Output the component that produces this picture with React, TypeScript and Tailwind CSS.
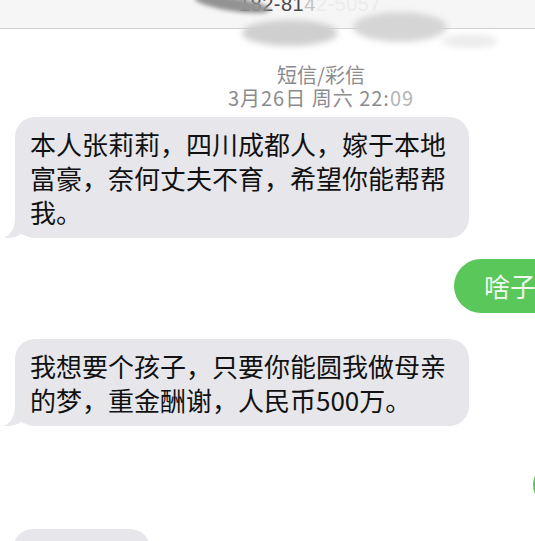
import React from "react";

const font = { fontFamily: '"Noto Sans CJK SC", "Noto Sans", sans-serif' };

function Tail() {
  return (
    <svg
      className="absolute bottom-0 left-[-12px]"
      width="22"
      height="20"
      viewBox="0 0 22 20"
    >
      <path
        d="M12 0 C12 10 8 17 0.5 20 C7 20.6 13 19.2 18 16 L22 17.5 L22 0 Z"
        fill="#e6e6eb"
      />
    </svg>
  );
}

function Received({ children, className = "" }: { children: React.ReactNode; className?: string }) {
  return (
    <div className={`flex pl-[15px] ${className}`}>
      <div className="relative max-w-[454px] rounded-[20px] bg-[#e6e6eb] pl-[15px] pr-[21px] pt-[10px] pb-[9px] text-[26px] leading-[34px] text-[#111111]">
        <Tail />
        <span className="relative">{children}</span>
      </div>
    </div>
  );
}

export default function App() {
  return (
    <div className="relative h-[541px] w-[535px] overflow-hidden bg-white" style={font}>
      <div className="w-[642px]">
        {/* header */}
        <div className="flex h-[29px] justify-center overflow-hidden border-b border-[#d2d2d2] bg-[#f6f6f6]">
          <div
            className="-mt-[6px] pr-[22px] text-[20px] leading-[20px] tracking-[0.5px]"
            style={{ fontFamily: '"Liberation Sans", Arial, sans-serif' }}
          >
            <span className="text-[#4a4a4a]">182-81</span>
            <span className="text-[#c4c4c4]">4</span>
            <span className="text-[#ececec]">2-5057</span>
          </div>
        </div>

        {/* date header */}
        <div className="mt-[34px] flex flex-col items-center text-[20px] leading-[23px] text-[#8b8b8f]">
          <div>短信/彩信</div>
          <div className="tracking-[1px]">
            3月26日 周六 22:<span className="text-[#b4b4b8]">09</span>
          </div>
        </div>

        <Received className="mt-[8px]">
          本人张莉莉，四川成都人，嫁于本地富豪，奈何丈夫不育，希望你能帮帮我。
        </Received>

        <div className="mt-[21px] flex pl-[454px]">
          <div className="rounded-[27px] bg-[#5ac75a] pl-[30px] pr-[20px] pt-[10px] pb-[10px] text-[26px] leading-[34px] text-[#eef9ee] whitespace-nowrap">
            啥子？
          </div>
        </div>

        <Received className="mt-[26px]">
          我想要个孩子，只要你能圆我做母亲的梦，重金酬谢，人民币500万。
        </Received>

        <div className="mt-[37px] flex pl-[533px]">
          <div className="h-[44px] w-[90px] rounded-[22px] bg-[#5ac75a]" />
        </div>

        <div className="mt-[22px] flex pl-[13px]">
          <div className="h-[50px] w-[137px] rounded-[20px] bg-[#e6e6eb]" />
        </div>
      </div>

      {/* redaction smudges */}
      <svg className="pointer-events-none absolute left-0 top-0" width="535" height="60" viewBox="0 0 535 60">
        <defs>
          <filter id="b2" x="-20%" y="-50%" width="140%" height="200%">
            <feGaussianBlur stdDeviation="2" />
          </filter>
          <filter id="b3" x="-20%" y="-50%" width="140%" height="200%">
            <feGaussianBlur stdDeviation="3" />
          </filter>
        </defs>
        <ellipse cx="232" cy="4" rx="38" ry="7" fill="#939393" transform="rotate(9 232 4)" filter="url(#b2)" />
        <ellipse cx="290" cy="33" rx="48" ry="13" fill="#cfcfcf" filter="url(#b3)" />
        <ellipse cx="400" cy="27" rx="47" ry="15" fill="#d5d5d5" filter="url(#b3)" />
        <ellipse cx="470" cy="41" rx="28" ry="7" fill="#ececec" filter="url(#b3)" />
      </svg>
    </div>
  );
}
